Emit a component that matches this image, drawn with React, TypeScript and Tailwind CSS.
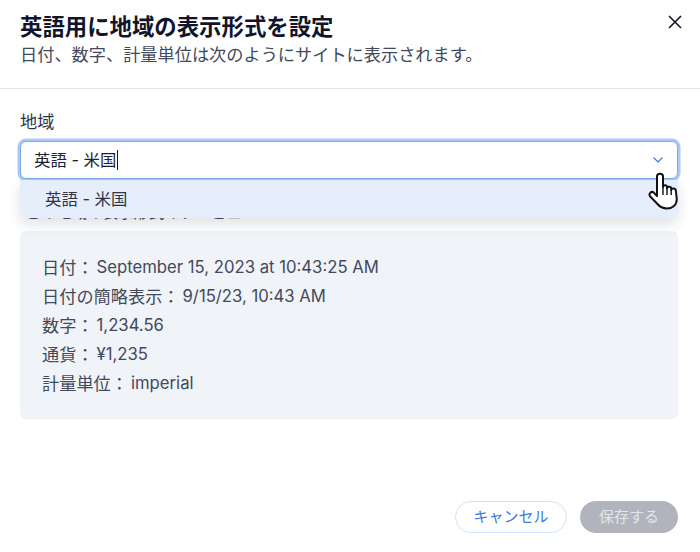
const rows = [
  { label: "日付：", value: "September 15, 2023 at 10:43:25 AM" },
  { label: "日付の簡略表示：", value: "9/15/23, 10:43 AM" },
  { label: "数字：", value: "1,234.56" },
  { label: "通貨：", value: "¥1,235" },
  { label: "計量単位：", value: "imperial" },
];

function HandCursor() {
  return (
    <svg
      width="32"
      height="38"
      viewBox="0 0 32 38"
      className="absolute left-[648px] top-[172px] z-20"
    >
      <path
        d="M9 24 L9 4.5 C9 0.8 15 0.8 15 4.5 L15 15 C15 12.5 19 12.5 19 15 L19 16.5 C19 14.2 23.2 14.2 23.2 16.5 L23.2 18 C23.2 15.8 27.8 16 27.8 18.5 L28.8 27 C28.8 33 24.5 36.5 19 36.5 C14 36.5 11.5 34.5 9 31.5 L2.2 24.5 C0.2 22 3.2 18.6 5.8 20.6 Z"
        fill="white"
        stroke="#111116"
        strokeWidth="2"
        strokeLinejoin="round"
      />
      <path d="M15 15 V23 M19 16 V23 M23.2 17.5 V23" stroke="#111116" strokeWidth="1.4" fill="none" />
    </svg>
  );
}

export default function App() {
  return (
    <div lang="ja" className="relative w-[700px] h-[552px] overflow-hidden bg-white font-['Inter','Noto_Sans_CJK_JP',sans-serif]">
      <div className="h-[89px] border-b border-[#dfe3e8] pl-[20px] pt-[13px] relative">
        <h1 className="text-[22.4px] leading-[28px] font-bold text-[#10152b]">英語用に地域の表示形式を設定</h1>
        <p className="text-[17.2px] leading-[28px] text-[#42495c]">日付、数字、計量単位は次のようにサイトに表示されます。</p>
        <button className="absolute right-[17px] top-[14px] text-[#10152b]">
          <svg width="16" height="16" viewBox="0 0 16 16" fill="none" stroke="currentColor" strokeWidth="1.6">
            <path d="M2 2 L14 14 M14 2 L2 14" />
          </svg>
        </button>
      </div>

      <div className="px-[20px] pt-[21px]">
        <label className="block text-[17.2px] leading-[24px] text-[#2f3547]">地域</label>

        <div className="relative mt-[7px] w-[658px]">
          <div className="flex h-[38px] items-center justify-between rounded-[6px] border border-[#7aa9ee] bg-white pl-[13px] pr-[13px] shadow-[0_0_0_2.5px_#a9caf7]">
            <span className="flex items-center text-[16.4px] text-[#1c2233]">
              英語 - 米国
              <span className="ml-px h-[20px] w-px bg-[#131720]" />
            </span>
            <svg width="12" height="8" viewBox="0 0 12 8" fill="none" stroke="#3a74e0" strokeWidth="1.2">
              <path d="M1.5 1.5 L6 6 L10.5 1.5" />
            </svg>
          </div>
          <div className="absolute left-0 right-0 top-[39px] z-10 flex h-[38px] items-center rounded-b-[8px] bg-[#e6eefc] pl-[25px] text-[16.4px] text-[#2f3547] shadow-[0_6px_14px_rgba(22,45,61,0.14)]">
            英語 - 米国
          </div>
        </div>

        <p className="mt-[22px] ml-[5px] text-[15.5px] leading-[24px] text-[#42495c]">この地域の表示形式のプレビュー</p>

        <div className="mt-[6px] h-[188px] w-[658px] rounded-[6px] bg-[#f0f3f7] pl-[22px] pt-[22px]">
          {rows.map((row) => (
            <div key={row.label} className="flex h-[29px] items-center text-[#42495c]">
              <span className="text-[17.2px]">{row.label}</span>
              <span className="ml-[3px] text-[16.7px]">{row.value}</span>
            </div>
          ))}
        </div>
      </div>

      <div className="absolute bottom-[19px] right-[22px] flex gap-[13px]">
        <button className="h-[32px] w-[112px] rounded-full border border-[#d6e4fb] bg-white text-[15px] text-[#3b78e0]">キャンセル</button>
        <button className="h-[32px] w-[98px] rounded-full bg-[#b2b4bd] text-[15px] text-[#e4e5e9]">保存する</button>
      </div>

      <HandCursor />
    </div>
  );
}
